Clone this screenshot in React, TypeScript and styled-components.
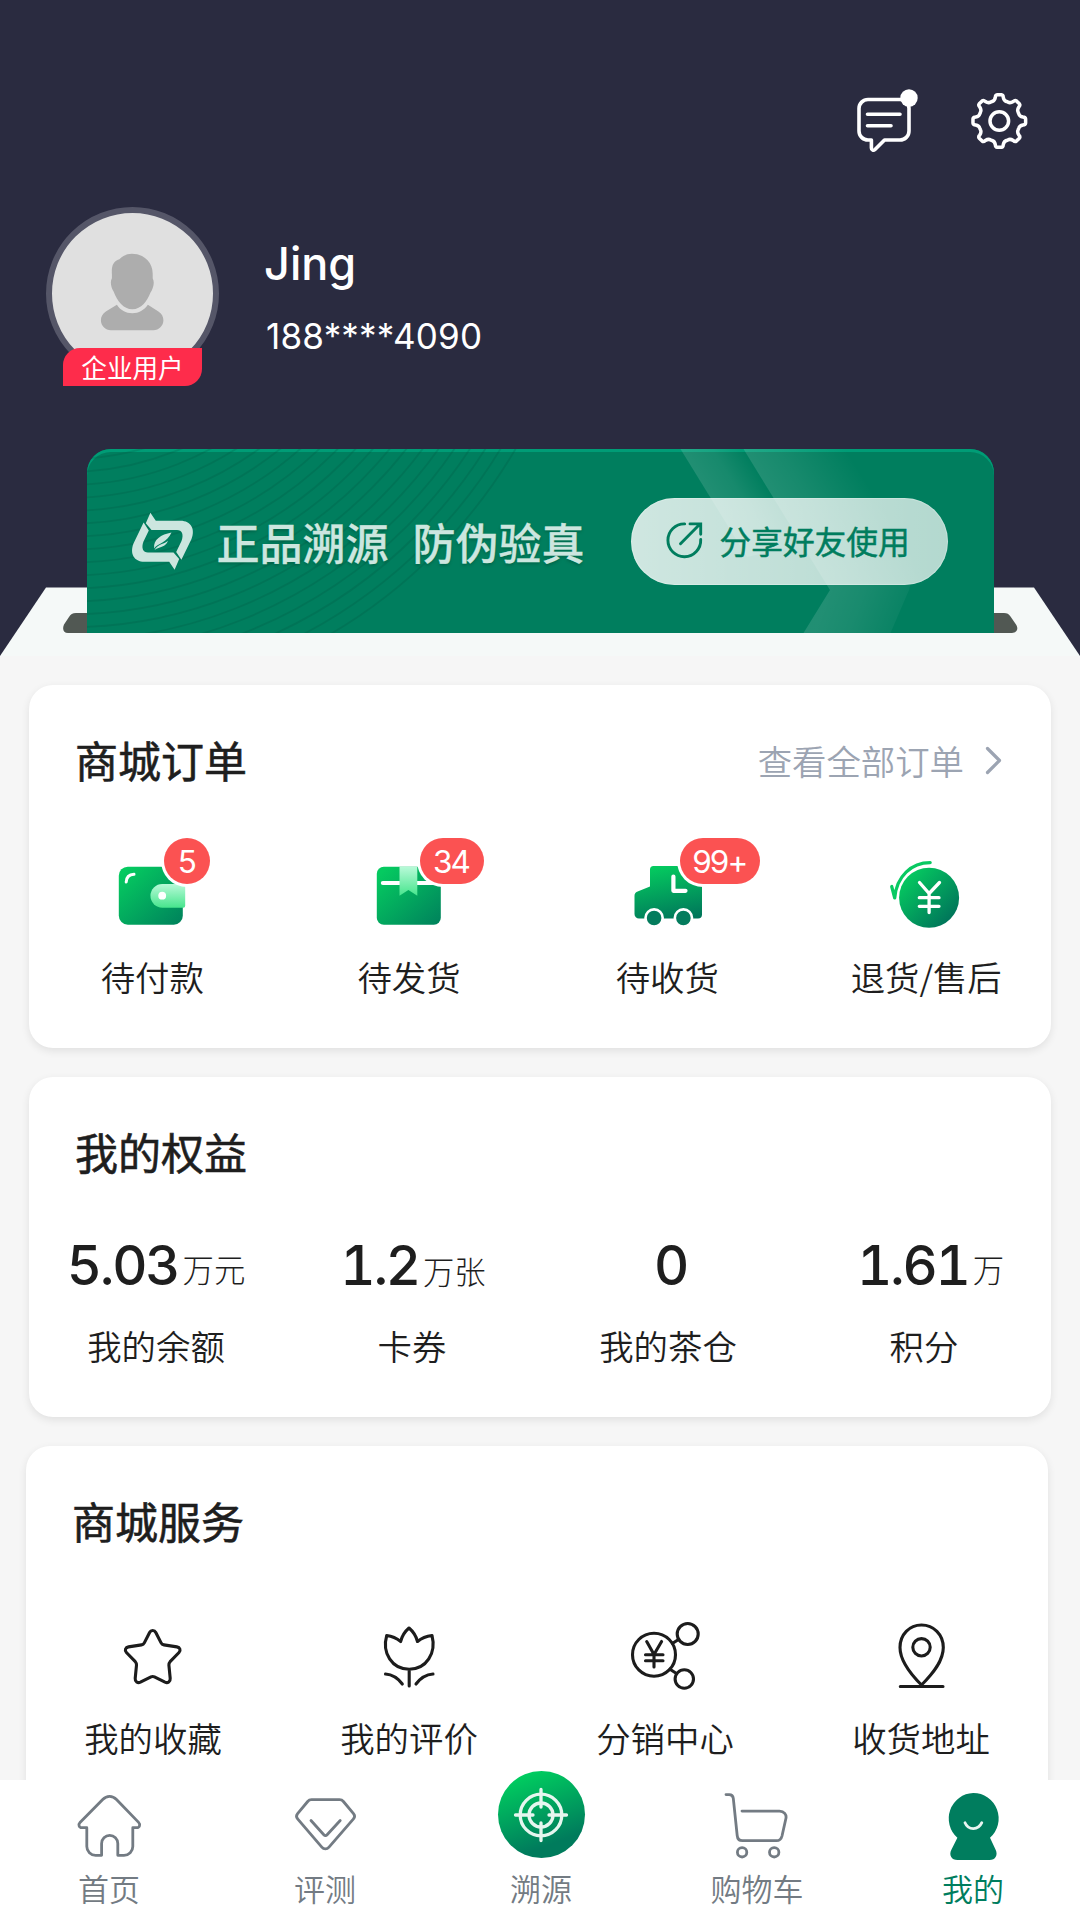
import React from "react";
import styled, { createGlobalStyle } from "styled-components";

const latin = `Inter, "Noto Sans CJK SC", sans-serif`;
const cjk = `"Noto Sans CJK SC", sans-serif`;

const GlobalStyle = createGlobalStyle`
  * { box-sizing: border-box; }
  body { margin: 0; background: #f6f6f6; font-family: ${cjk}; }
  svg { display: block; overflow: visible; }
`;

const Screen = styled.div`
  width: 1080px;
  height: 1920px;
  display: flex;
  flex-direction: column;
  overflow: hidden;
  background: #f6f6f6;
`;

const Main = styled.main`
  flex: 1;
  min-height: 0;
  overflow: hidden;
`;

/* ---------- header ---------- */

const Header = styled.header`
  height: 656px;
  background: #2a2b40;
  display: flex;
  flex-direction: column;
`;

const Toolbar = styled.div`
  height: 207px;
  padding: 86px 50px 0 0;
  display: flex;
  justify-content: flex-end;
  gap: 51px;
`;

const Profile = styled.section`
  height: 242px;
  padding-left: 46px;
  display: flex;
  gap: 45px;
`;

const Avatar = styled.div`
  position: relative;
  width: 173px;
  height: 173px;
  border-radius: 50%;
  border: 6px solid #555668;
  background: #e0e0e0;
  display: flex;
  justify-content: center;
  padding-top: 41px;
`;

const UserTag = styled.span`
  position: absolute;
  left: 11px;
  top: 135px;
  width: 139px;
  height: 38px;
  border-radius: 17px 0 17px 0;
  background: #fe2c4b;
  color: #fff;
  font-size: 25.6px;
  line-height: 38px;
  text-align: center;
`;

const Identity = styled.div`
  padding-top: 29px;
  color: #fff;
  font-family: ${latin};
`;

const Name = styled.h1`
  margin: 0;
  font-size: 45px;
  line-height: 56px;
  font-weight: 550;
`;

const Phone = styled.p`
  margin: 22px 0 0 2px;
  font-size: 35px;
  line-height: 44px;
  font-weight: 370;
  letter-spacing: 0.2px;
`;

const BannerZone = styled.div`
  position: relative;
  height: 207px;
  display: flex;
  justify-content: center;
`;

const Tray = styled.div`
  position: absolute;
  left: 0;
  right: 0;
  bottom: 0;
  height: 69px;
`;

const Banner = styled.section`
  position: relative;
  width: 907px;
  height: 184px;
  padding: 0 46px 0 45px;
  border-radius: 24px 24px 0 0;
  background: #007e5e;
  box-shadow: inset 0 3px 0 #009c76;
  overflow: hidden;
  display: flex;
  align-items: center;
`;

const BannerArt = styled.svg`
  position: absolute;
  inset: 0;
`;

const BrandLogo = styled.svg`
  position: relative;
  margin-left: -1px;
`;

const BannerTitle = styled.h2`
  position: relative;
  margin: -1px 0 0 23px;
  display: flex;
  gap: 24px;
  color: #cce6df;
  font-size: 43px;
  line-height: 60px;
  font-weight: 500;
  -webkit-text-stroke: 0.3px #cce6df;
  text-shadow: 0 2px 3px rgba(0, 60, 40, 0.35);
`;

const ShareButton = styled.button`
  position: relative;
  margin: 0 0 0 auto;
  width: 317px;
  height: 87px;
  padding: 0 0 2px 35px;
  border: 0;
  border-radius: 44px;
  background: linear-gradient(90deg, rgba(255, 255, 255, 0.81), rgba(255, 255, 255, 0.7));
  box-shadow: inset 0 0 0 1px rgba(255, 255, 255, 0.25);
  display: flex;
  align-items: center;
  gap: 17px;
  color: #007d5e;
  font-family: ${cjk};
  font-size: 31.7px;
  font-weight: 400;
  -webkit-text-stroke: 0.5px #007d5e;
`;

/* ---------- cards ---------- */

const Cards = styled.div`
  display: flex;
  flex-direction: column;
  align-items: center;
  gap: 29px;
  padding-top: 29px;
`;

const Card = styled.section<{ $height: number; $shift?: number }>`
  width: 1022px;
  height: ${(p) => p.$height}px;
  margin-left: ${(p) => p.$shift ?? 0}px;
  border-radius: 24px;
  background: #fff;
  box-shadow: 0 3px 8px rgba(0, 0, 0, 0.09);
`;

const CardHead = styled.div`
  height: 156px;
  padding: 0 49px 0 46px;
  display: flex;
  justify-content: space-between;
`;

const CardTitle = styled.h2`
  margin: 42px 0 0;
  height: 64px;
  color: #1e1e1e;
  font-size: 43px;
  line-height: 64px;
  font-weight: 400;
  -webkit-text-stroke: 0.6px #1e1e1e;
`;

const MoreLink = styled.a`
  margin-top: 50px;
  height: 50px;
  display: flex;
  align-items: center;
  gap: 22px;
  color: #9ca4b2;
  font-size: 34.4px;
  line-height: 50px;
  font-weight: 350;
`;

const Grid = styled.div<{ $columns: string }>`
  display: grid;
  grid-template-columns: ${(p) => p.$columns};
  justify-content: center;
`;

const Cell = styled.div`
  position: relative;
  display: flex;
  flex-direction: column;
  align-items: center;
`;

const Label = styled.span<{ $top: number }>`
  margin-top: ${(p) => p.$top}px;
  color: #1e1e1e;
  font-size: 34.4px;
  line-height: 50px;
  font-weight: 350;
  white-space: nowrap;
`;

const OrderIcon = styled.div`
  position: relative;
  width: 70px;
  height: 64px;
  margin-top: 21px;
`;

const ServiceIcon = styled.div`
  margin-top: 20px;
`;

const CountBadge = styled.span<{ $left: number; $width: number }>`
  position: absolute;
  left: ${(p) => p.$left}px;
  top: -24px;
  width: ${(p) => p.$width}px;
  height: 46px;
  border-radius: 23px;
  background: #fb5252;
  box-shadow: 0 0 0 3px #fff;
  color: #fff;
  font-family: ${latin};
  font-size: 31.5px;
  font-weight: 400;
  letter-spacing: -1.9px;
  line-height: 47px;
  text-indent: -1px;
  text-align: center;
`;

const Amount = styled.div<{ $offset: number }>`
  height: 64px;
  margin: 0 0 0 ${(p) => p.$offset}px;
  display: flex;
  align-items: baseline;
  gap: 4px;
  color: #1e1e1e;
  font-family: ${latin};
  font-size: 54.5px;
  line-height: 64px;
  font-weight: 450;
  font-variant-numeric: tabular-nums;
  letter-spacing: -2.2px;
`;

const Unit = styled.small<{ $drop: number }>`
  position: relative;
  top: ${(p) => p.$drop}px;
  font-family: ${cjk};
  font-size: 31.4px;
  font-weight: 300;
  letter-spacing: 0;
`;

/* ---------- tab bar ---------- */

const TabBar = styled.nav`
  position: relative;
  height: 140px;
  padding-left: 1px;
  background: #fff;
  display: grid;
  grid-template-columns: repeat(5, 216px);
`;

const Tab = styled.a<{ $active?: boolean }>`
  display: flex;
  flex-direction: column;
  align-items: center;
  color: ${(p) => (p.$active ? "#007d5e" : "#737b83")};
  font-size: 31px;
  line-height: 44px;
  font-weight: 350;
`;

const TabIcon = styled.div`
  height: 86px;
  padding-top: 14px;
`;

const ScanDisc = styled.div`
  width: 87px;
  height: 87px;
  margin: -9px 0 8px;
  border-radius: 50%;
  background: linear-gradient(160deg, #00d460 5%, #007b5c 78%);
  display: grid;
  place-items: center;
`;

/* ---------- drawings ---------- */

const MessageIcon = () => (
  <svg width="64" height="68" viewBox="0 0 64 68" fill="none" stroke="#fff" strokeWidth="3.6" strokeLinecap="round" strokeLinejoin="round">
    <path d="M15 13.5H47a9 9 0 0 1 9 9V45a9 9 0 0 1-9 9H31.500l-9.500 9.500c-1.500 1.400-3.600.8-3.600-1.500V54H15a9 9 0 0 1-9-9V22.500a9 9 0 0 1 9-9Z" />
    <path d="M14.500 28.200H47M14.500 39.700H38" />
    <circle cx="56" cy="12" r="8.700" fill="#fff" stroke="none" />
  </svg>
);

const gearPath = (() => {
  const cx = 31.3;
  const cy = 35;
  const pt = (r: number, deg: number) => {
    const a = (deg * Math.PI) / 180;
    return `${(cx + r * Math.cos(a)).toFixed(2)} ${(cy + r * Math.sin(a)).toFixed(2)}`;
  };
  let d = "";
  for (let i = 0; i < 8; i++) {
    const a = i * 45;
    d += `${i ? "L" : "M"}${pt(24, a - 9.5)}Q${pt(26.4, a - 8.5)} ${pt(26.4, a - 4.5)}L${pt(26.4, a + 4.5)}Q${pt(26.4, a + 8.5)} ${pt(24, a + 9.5)}Q${pt(20.8, a + 13)} ${pt(20.8, a + 20)}L${pt(20.8, a + 25)}Q${pt(20.8, a + 32)} ${pt(24, a + 35.5)}`;
  }
  return d + "Z";
})();

const GearIcon = () => (
  <svg width="62" height="68" viewBox="0 0 62 68" fill="none" stroke="#fff" strokeWidth="3.5" strokeLinejoin="round">
    <path d={gearPath} />
    <circle cx="31.300" cy="35" r="9.300" />
  </svg>
);

const PersonGlyph = () => (
  <svg width="64" height="78" viewBox="0.600 .7 64 78" fill="#adadad">
    <path d="M31.500.5c-5 0-9 2-12.500 5.500C12.500 8 11 13 11.500 21v4c-2 3-1 9 1.800 13.500C17 48 23 56 32 56s14.500-8 18-16.500C53 35 54.500 29 52.300 25v-4.500C52.300 8.500 43 .5 31.500.5Z" />
    <path d="M16.500 51.500 5.800 58C2 60.500.5 63.500.5 67c0 5.500 4.500 10 10 10h42.500c5.500 0 10-4.500 10-10 0-3.500-1.700-6.500-5-8.700L47.500 51.500C43.500 57 38.500 60 32 60s-12-3-15.500-8.500Z" />
  </svg>
);

const TrayArt = () => (
  <svg width="1080" height="69" viewBox="0 0 1080 69">
    <path d="M46 .5H1034L1080 69H0Z" fill="#f5f9f8" />
    <path d="M76 26H1004c3 0 5 1 6.500 3.500L1016 37.500c3 4.500.5 8.500-4 8.500H68c-4.500 0-6-4-4-8.500L69 30c1.600-2.700 3.500-4 7-4Z" fill="#515853" />
  </svg>
);

const rings = Array.from({ length: 20 }, (_, i) => 272 + i * 12.95);

const BannerPattern = () => (
  <BannerArt width="907" height="184" viewBox="0 0 907 184">
    <defs>
      <linearGradient id="beamA" gradientUnits="userSpaceOnUse" x1="593.500" y1="0" x2="640" y2="-28.500">
        <stop offset="0" stopColor="#fff" stopOpacity=".13" />
        <stop offset=".5" stopColor="#fff" stopOpacity=".09" />
        <stop offset="1" stopColor="#fff" stopOpacity="0" />
      </linearGradient>
      <linearGradient id="beamB" gradientUnits="userSpaceOnUse" x1="656.500" y1="0" x2="731" y2="-46">
        <stop offset="0" stopColor="#fff" stopOpacity=".13" />
        <stop offset=".35" stopColor="#fff" stopOpacity=".09" />
        <stop offset="1" stopColor="#fff" stopOpacity="0" />
      </linearGradient>
      <linearGradient id="beamC" gradientUnits="userSpaceOnUse" x1="740" y1="150" x2="815" y2="178">
        <stop offset="0" stopColor="#fff" stopOpacity=".13" />
        <stop offset=".4" stopColor="#fff" stopOpacity=".1" />
        <stop offset="1" stopColor="#fff" stopOpacity=".03" />
      </linearGradient>
    </defs>
    <g fill="none" stroke="#004f3c" strokeOpacity=".2" strokeWidth="1.800">
      {rings.map((r) => (
        <circle key={r} cx="-18.500" cy="-262" r={r} />
      ))}
    </g>
    <path d="M593.500 0H656.500L715 95 660 108Z" fill="url(#beamA)" />
    <path d="M656.500 0H800L881 133H738Z" fill="url(#beamB)" />
    <path d="M738 133 743 141 716.500 184H803.500L822 141 824 133Z" fill="url(#beamC)" />
  </BannerArt>
);

const BrandHalf = () => (
  <path d="M19.400.7 24.800 8.700H49.500C60 8.700 64.500 17 60.500 27L50.400 47.800 45.200 40 50.500 29C53 22.500 51 18 46 18H20.500L14.800 11.300Z" />
);

const BrandMark = () => (
  <BrandLogo width="63" height="59" viewBox="0 0 63 59" fill="#cce6df">
    <BrandHalf />
    <g transform="rotate(180 31.500 29.200)">
      <BrandHalf />
    </g>
    <path d="M40.500 20.500C30 22.500 22 27.500 23.200 36.500 26 31.500 36.500 30.500 40.500 20.500Z" />
    <path d="M37 28.800C34 32 26.500 32 23.500 38 29 34.500 34.500 35.500 37 28.800Z" />
  </BrandLogo>
);

const ShareIcon = () => (
  <svg width="37" height="38" viewBox="0 0 37 38" fill="none" stroke="#007d5e" strokeWidth="2.9" strokeLinecap="round">
    <path d="M18.700 2.900A16.400 16.400 0 1 0 34.700 18.500" />
    <path d="M14.500 22.700 33.500 3.500M24 2.900H34.700V13.300" />
  </svg>
);

const Chevron = () => (
  <svg width="16" height="28" viewBox="0 -1.500 16 28" fill="none" stroke="#9ca4b2" strokeWidth="3.2" strokeLinecap="round" strokeLinejoin="round">
    <path d="M1.500 1 13.500 13 1.500 25" />
  </svg>
);

const OrderGradients = () => (
  <defs>
    <linearGradient id="leaf" x1="0" y1="0" x2="1" y2="1">
      <stop offset=".08" stopColor="#05ca60" />
      <stop offset=".95" stopColor="#00855c" />
    </linearGradient>
    <linearGradient id="leafDeep" x1="0" y1="0" x2="1" y2="1">
      <stop offset=".14" stopColor="#05c860" />
      <stop offset=".88" stopColor="#00735a" />
    </linearGradient>
    <linearGradient id="leafDown" gradientUnits="userSpaceOnUse" x1="28" y1="4" x2="40" y2="62">
      <stop offset="0" stopColor="#04ca5f" />
      <stop offset="1" stopColor="#00735a" />
    </linearGradient>
    <linearGradient id="mint" x1="0" y1="0" x2="0" y2="1">
      <stop offset="0" stopColor="#b8fad8" />
      <stop offset="1" stopColor="#47e58d" />
    </linearGradient>
  </defs>
);

const WalletIcon = () => (
  <svg width="70" height="64" viewBox="0 0 70 64">
    <OrderGradients />
    <rect x="1.800" y="4.700" width="64" height="58" rx="9" fill="url(#leaf)" />
    <path d="M9.200 20Q9.500 12.500 17 12.200" fill="none" stroke="#fff" strokeWidth="3" strokeLinecap="round" />
    <path d="M45.300 22H68.200V43.700a2 2 0 0 1-2 2H45.300a11.850 11.850 0 0 1 0-23.700Z" fill="url(#mint)" />
    <circle cx="45.200" cy="33.700" r="3.900" fill="#fff" />
  </svg>
);

const ParcelIcon = () => (
  <svg width="70" height="64" viewBox="1 0 70 64">
    <rect x="3.800" y="4.700" width="64" height="58" rx="7" fill="url(#leaf)" />
    <path d="M9.800 21H60" stroke="#fff" strokeWidth="4" strokeLinecap="round" />
    <path d="M26.500 4.700H44.300V33.700L35.400 28 26.500 33.700Z" fill="url(#mint)" />
  </svg>
);

const TruckIcon = () => (
  <svg width="70" height="64" viewBox="-1 0 70 64">
    <path d="M20.500 4H65a4 4 0 0 1 4 4V52.500a4 4 0 0 1-4 4H6a4.500 4.500 0 0 1-4.500-4.500V34c0-2 .7-3.200 2.500-4.200L17 24.500V7.500A3.500 3.500 0 0 1 20.500 4Z" fill="url(#leafDown)" />
    <path d="M40.400 14.500V28.800H52.500" fill="none" stroke="#fff" strokeWidth="4.200" strokeLinecap="round" strokeLinejoin="round" />
    <circle cx="21.100" cy="56" r="8.600" fill="#047c5d" stroke="#fff" strokeWidth="2.600" />
    <circle cx="50.400" cy="56" r="8.600" fill="#047c5d" stroke="#fff" strokeWidth="2.600" />
  </svg>
);

const RefundIcon = () => (
  <svg width="70" height="64" viewBox="-.5 0 70 64" fill="none" strokeLinecap="round" strokeLinejoin="round">
    <circle cx="37.600" cy="35.700" r="30" fill="url(#leafDeep)" />
    <path d="M38.700.6C20 .6 5 14 3.200 36L.2 24.500" stroke="#08c962" strokeWidth="3.200" />
    <path d="M28 20.500 37.600 31.500 48 20.500M37.600 31.500V50.500M27.800 35.700H47.500M27.800 44.300H47.500" stroke="#fff" strokeWidth="3.300" />
  </svg>
);

const LineIcon = styled.svg.attrs({ width: 70, height: 70, viewBox: "0 0 70 70" })`
  fill: none;
  stroke: #1c1c1c;
  stroke-width: 3.1px;
  stroke-linecap: round;
  stroke-linejoin: round;
`;

const StarIcon = () => (
  <LineIcon>
    <path d="M31.600 10.500c1.300-2.600 4.900-2.600 6.200 0L43.100 20.900c.6 1.200 1.500 1.800 2.800 2l13 2c3 .5 4.200 3.400 2.100 5.600L52.100 39.700c-.9 1-1.300 2-1.200 3.400l1.300 13.300c.3 3.200-2.400 5-5.200 3.800L36.400 54.900c-1.200-.6-2.200-.6-3.400 0L22.400 60.200c-2.800 1.200-5.500-.6-5.200-3.800L18.500 43.100c.1-1.400-.3-2.400-1.200-3.400L8.400 30.500c-2.100-2.200-.9-5.100 2.100-5.600l13-2c1.300-.2 2.200-.8 2.800-2Z" />
  </LineIcon>
);

const TulipIcon = () => (
  <LineIcon>
    <path d="M12.700 13.500Q20.500 14.500 26.700 19.500 28.500 11.500 35 6 41.500 11.500 43.500 19.500 49.500 14.500 58 13.500C62.500 31 52.500 47.300 35.200 47.300S7.800 31 12.700 13.500ZM35.200 47.300V64M11.500 52Q21.500 52.800 28.300 62M59 52Q48.800 52.800 42 62" />
  </LineIcon>
);

const NetworkIcon = () => (
  <LineIcon>
    <circle cx="24" cy="32.700" r="21.500" />
    <circle cx="57.700" cy="12" r="10.500" />
    <circle cx="54.300" cy="57" r="9.200" />
    <path d="M42.300 21.500 48.500 17.500M40 47.300 46.500 51.500M16.700 19.500 24 32.500 31.600 19.500M24 32V45M15.500 32.700H33M15.500 38.700H33" />
  </LineIcon>
);

const PinIcon = () => (
  <LineIcon>
    <path d="M35.500 3C23.500 3 14 12.500 14 25.500 14 39 24 51.500 35.500 63 47 51.500 57.300 39 57.300 25.500 57.300 12.500 47.500 3 35.500 3ZM14.300 64.500H57" />
    <circle cx="35.500" cy="25.300" r="8.700" />
  </LineIcon>
);

const TabGlyph = styled.svg.attrs({ width: 64, height: 60, viewBox: "0 0 64 60" })`
  fill: none;
  stroke: #737b83;
  stroke-width: 2.8px;
  stroke-linecap: round;
  stroke-linejoin: round;
`;

const HomeGlyph = () => (
  <TabGlyph>
    <path d="M9.800 33.700V52.500a8.800 8.800 0 0 0 8.800 8.800H24.600V49.500a8 8 0 0 1 16.200 0V61.300H47a8.800 8.800 0 0 0 8.800-8.800V33.700H59.800c2.800 0 3.800-3.200 1.800-5.300L39.500 5.500c-4-4.200-9.800-4.200-13.800 0L3 28.400c-2 2.100-1 5.300 1.800 5.300Z" />
  </TabGlyph>
);

const GemGlyph = () => (
  <TabGlyph>
    <path d="M18.500 5.700H46.500c1.700 0 2.900.6 3.900 1.800L60.500 19.600c1.400 1.700 1.400 3.600 0 5.200L36 53.200c-2 2.300-5.200 2.300-7.200 0L4.600 24.800c-1.400-1.600-1.400-3.500 0-5.200L14.700 7.500c1-1.200 2.100-1.800 3.800-1.800Z" />
    <path d="M18 26.500 30.800 40.700c1 1.100 2.300 1.100 3.300 0L47.200 26.500" />
  </TabGlyph>
);

const CartGlyph = () => (
  <TabGlyph>
    <path d="M1 .6H4.300C7 .6 8 1.900 8.300 4.400L12.200 41.500c.3 3.500 2 5.200 5.300 5.200H51.500c3 0 4.700-1.500 5.500-4.700L60.900 24.500c.9-4-1.900-7.400-6.400-7.400H17" />
    <circle cx="17.100" cy="58.300" r="4.700" />
    <circle cx="49.200" cy="58.300" r="4.700" />
  </TabGlyph>
);

const MeGlyph = () => (
  <TabGlyph>
    <path d="M32.200-1A25.300 25.500 0 0 0 16.400 43.700L10.500 55.500C7.500 61 10.500 66 16.500 66H48.500C54.500 66 57.300 61 54.500 55.500L49 43.700A25.300 25.500 0 0 0 32.200-1Z" fill="#007d5e" stroke="none" />
    <path d="M24 28.700Q26.500 34.600 32.300 34.600T40.800 28.700" stroke="#e8f5f1" />
  </TabGlyph>
);

const TargetGlyph = () => (
  <svg width="56" height="56" viewBox="-28 -28 56 56" fill="none" stroke="#e6f6ef" strokeWidth="3.3" strokeLinecap="round">
    <circle r="20.800" />
    <circle r="12" />
    <path d="M0-25.500V-8M0 25.500V8M-25.500 0H-8M25.500 0H8" />
  </svg>
);

/* ---------- data ---------- */

const orders = [
  { label: "待付款", icon: <WalletIcon />, badge: "5", left: 46.5, width: 46 },
  { label: "待发货", icon: <ParcelIcon />, badge: "34", left: 45.5, width: 64 },
  { label: "待收货", icon: <TruckIcon />, badge: "99+", left: 47.5, width: 80 },
  { label: "退货/售后", icon: <RefundIcon /> },
];

const benefits = [
  { value: "5.03", unit: "万元", drop: -3, label: "我的余额", offset: 0 },
  { value: "1.2", unit: "万张", drop: -1, label: "卡券", offset: 2 },
  { value: "0", unit: "", drop: 0, label: "我的茶仓", offset: 5 },
  { value: "1.61", unit: "万", drop: -3, label: "积分", offset: 13 },
];

const services = [
  { label: "我的收藏", icon: <StarIcon /> },
  { label: "我的评价", icon: <TulipIcon /> },
  { label: "分销中心", icon: <NetworkIcon /> },
  { label: "收货地址", icon: <PinIcon /> },
];

export default function App() {
  return (
    <Screen>
      <GlobalStyle />
      <Main>
        <Header>
          <Toolbar>
            <MessageIcon />
            <GearIcon />
          </Toolbar>
          <Profile>
            <Avatar>
              <PersonGlyph />
              <UserTag>企业用户</UserTag>
            </Avatar>
            <Identity>
              <Name>Jing</Name>
              <Phone>188****4090</Phone>
            </Identity>
          </Profile>
          <BannerZone>
            <Tray>
              <TrayArt />
            </Tray>
            <Banner>
              <BannerPattern />
              <BrandMark />
              <BannerTitle>
                <span>正品溯源</span>
                <span>防伪验真</span>
              </BannerTitle>
              <ShareButton>
                <ShareIcon />
                分享好友使用
              </ShareButton>
            </Banner>
          </BannerZone>
        </Header>

        <Cards>
          <Card $height={363}>
            <CardHead>
              <CardTitle>商城订单</CardTitle>
              <MoreLink>
                查看全部订单
                <Chevron />
              </MoreLink>
            </CardHead>
            <Grid $columns="256px 257.5px 259px 259px">
              {orders.map((o) => (
                <Cell key={o.label}>
                  <OrderIcon>
                    {o.icon}
                    {o.badge && (
                      <CountBadge $left={o.left!} $width={o.width!}>
                        {o.badge}
                      </CountBadge>
                    )}
                  </OrderIcon>
                  <Label $top={25}>{o.label}</Label>
                </Cell>
              ))}
            </Grid>
          </Card>

          <Card $height={340}>
            <CardHead>
              <CardTitle>我的权益</CardTitle>
            </CardHead>
            <Grid $columns="repeat(4, 256px)">
              {benefits.map((b) => (
                <Cell key={b.label}>
                  <Amount $offset={b.offset}>
                    {b.value}
                    {b.unit && <Unit $drop={b.drop}>{b.unit}</Unit>}
                  </Amount>
                  <Label $top={23}>{b.label}</Label>
                </Cell>
              ))}
            </Grid>
          </Card>

          <Card $height={400} $shift={-6}>
            <CardHead>
              <CardTitle>商城服务</CardTitle>
            </CardHead>
            <Grid $columns="repeat(4, 256px)">
              {services.map((s) => (
                <Cell key={s.label}>
                  <ServiceIcon>{s.icon}</ServiceIcon>
                  <Label $top={20}>{s.label}</Label>
                </Cell>
              ))}
            </Grid>
          </Card>
        </Cards>
      </Main>

      <TabBar>
        <Tab>
          <TabIcon><HomeGlyph /></TabIcon>
          首页
        </Tab>
        <Tab>
          <TabIcon><GemGlyph /></TabIcon>
          评测
        </Tab>
        <Tab>
          <ScanDisc><TargetGlyph /></ScanDisc>
          溯源
        </Tab>
        <Tab>
          <TabIcon><CartGlyph /></TabIcon>
          购物车
        </Tab>
        <Tab $active>
          <TabIcon><MeGlyph /></TabIcon>
          我的
        </Tab>
      </TabBar>
    </Screen>
  );
}
